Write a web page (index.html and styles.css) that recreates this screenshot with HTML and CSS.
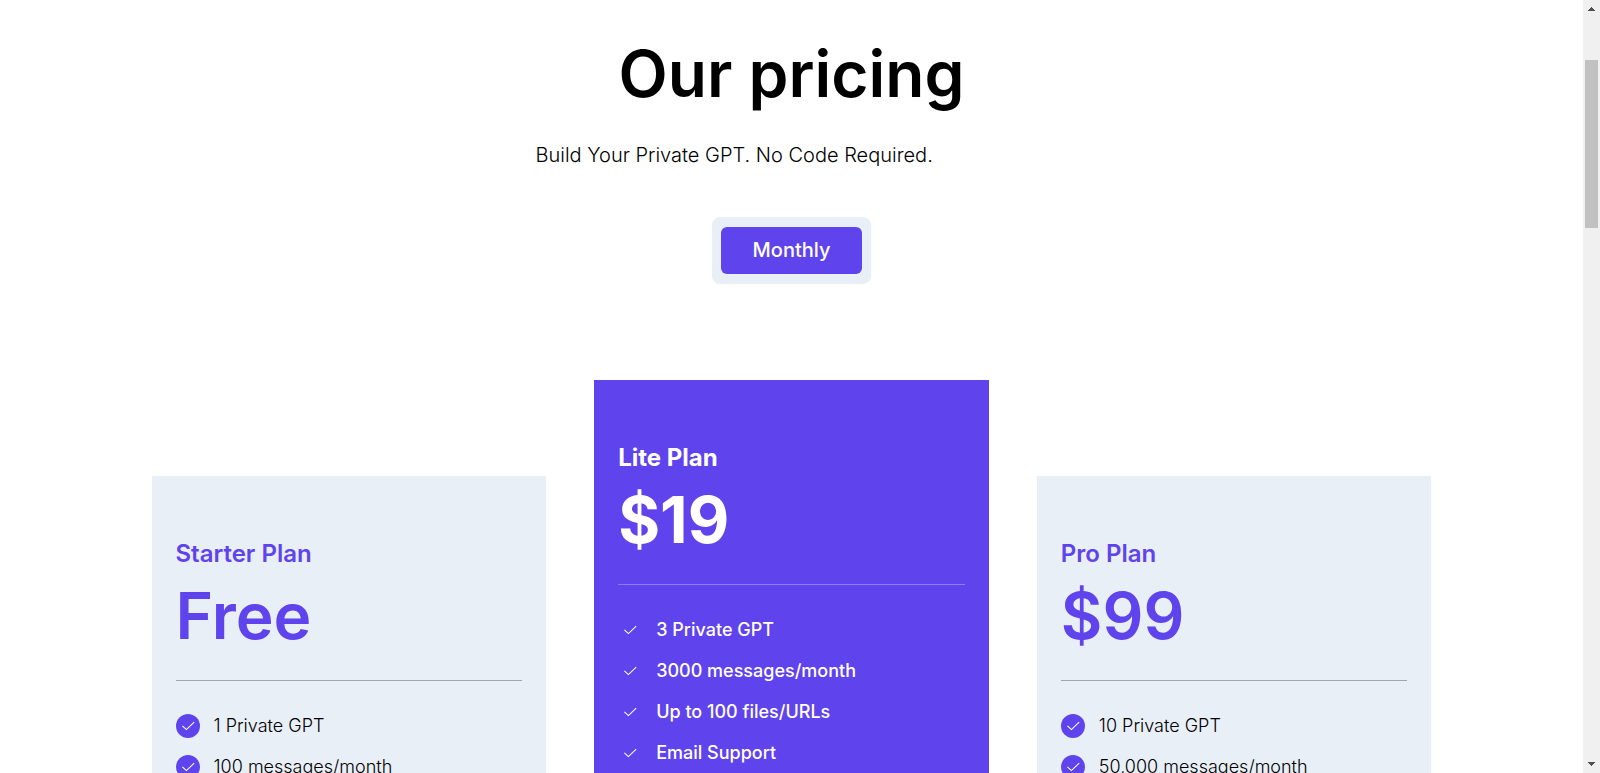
FILE: index.html
```html
<!DOCTYPE html>
<html lang="en">
<head>
<meta charset="utf-8">
<title>Our pricing</title>
<link rel="stylesheet" href="styles.css">
</head>
<body>
<svg class="defs" aria-hidden="true">
  <symbol id="check" viewBox="0 0 24 24">
    <path d="M6.4 11.8L10.4 15.6L18.2 8.2" fill="none" stroke="#fff" stroke-width="1.1"/>
  </symbol>
</svg>
<div class="viewport">
  <main class="page">
    <header class="intro">
      <h1 class="heading">Our pricing</h1>
      <p class="subheading">Build Your Private GPT. No Code Required.</p>
      <div class="toggle"><button class="toggle-button" type="button">Monthly</button></div>
    </header>
    <section class="plans">
      <article class="card">
        <h2 class="plan-name">Starter Plan</h2>
        <p class="price">Free</p>
        <ul class="features">
          <li class="feature"><svg class="tick"><use href="#check"/></svg>1 Private GPT</li>
          <li class="feature"><svg class="tick"><use href="#check"/></svg>100 messages/month</li>
        </ul>
      </article>
      <article class="card featured">
        <h2 class="plan-name">Lite Plan</h2>
        <p class="price">$19</p>
        <ul class="features">
          <li class="feature"><svg class="tick"><use href="#check"/></svg>3 Private GPT</li>
          <li class="feature"><svg class="tick"><use href="#check"/></svg>3000 messages/month</li>
          <li class="feature"><svg class="tick"><use href="#check"/></svg>Up to 100 files/URLs</li>
          <li class="feature"><svg class="tick"><use href="#check"/></svg>Email Support</li>
        </ul>
      </article>
      <article class="card">
        <h2 class="plan-name">Pro Plan</h2>
        <p class="price">$99</p>
        <ul class="features">
          <li class="feature"><svg class="tick"><use href="#check"/></svg>10 Private GPT</li>
          <li class="feature"><svg class="tick"><use href="#check"/></svg>50,000 messages/month</li>
        </ul>
      </article>
    </section>
  </main>
  <div class="scrollbar" aria-hidden="true">
    <svg class="arrow" viewBox="0 0 17 17" shape-rendering="crispEdges"><path d="M8 7h1v1h1v1h1v1h1v1H5v-1h1V9h1V8h1z" fill="#505050"/></svg>
    <div class="track"><div class="thumb"></div></div>
    <svg class="arrow" viewBox="0 0 17 17" shape-rendering="crispEdges"><path d="M5 6h7v1h-1v1h-1v1H9v1H8V9H7V8H6V7H5z" fill="#505050"/></svg>
  </div>
</div>
</body>
</html>
```

FILE: styles.css
```css
* {
  box-sizing: border-box;
  margin: 0;
  padding: 0;
}

body {
  background: #fff;
  color: #000;
  font-family: Inter, "Liberation Sans", sans-serif;
}

.defs {
  display: none;
}

.viewport {
  display: flex;
  height: 100vh;
  overflow: hidden;
}

.page {
  flex: 1;
  display: flex;
  flex-direction: column;
  gap: 96px;
  padding-top: 36px;
  overflow: hidden;
}

.intro {
  display: flex;
  flex-direction: column;
  align-items: center;
}

.heading {
  font-size: 64px;
  font-weight: 600;
  line-height: 76px;
}

.subheading {
  width: 100%;
  max-width: 512px;
  margin: 29px 0 48px;
  font-size: 20px;
  font-weight: 300;
  line-height: 28px;
}

.toggle {
  padding: 10px 9px;
  border-radius: 8px;
  background: #e8eff7;
}

.toggle-button {
  display: block;
  padding: 10px 32px;
  border: 0;
  border-radius: 6px;
  background: #5f43ec;
  color: #fff;
  font: 500 20px/27px Inter, "Liberation Sans", sans-serif;
}

.plans {
  display: grid;
  grid-template-columns: repeat(3, 1fr);
  gap: 48px;
  width: 100%;
  max-width: 1280px;
  margin: 0 auto;
}

.card {
  margin-top: 96px;
  padding: 60px 24px;
  background: #e8eff7;
}

.featured {
  margin-top: 0;
  background: #5f43ec;
  color: #fff;
}

.plan-name {
  color: #5f43ec;
  font-size: 24px;
  font-weight: 600;
  line-height: 36px;
}

.price {
  color: #5f43ec;
  font-size: 64px;
  font-weight: 600;
  line-height: 88px;
}

.featured .plan-name,
.featured .price {
  color: #fff;
  font-weight: 700;
}

.features {
  display: flex;
  flex-direction: column;
  gap: 17px;
  margin-top: 20px;
  padding-top: 33px;
  border-top: 1px solid #a2a5b0;
  list-style: none;
}

.featured .features {
  border-color: #8f7bf2;
}

.feature {
  display: flex;
  align-items: center;
  gap: 14px;
  font-size: 18px;
  font-weight: 300;
  line-height: 24px;
}

.featured .feature {
  font-weight: 500;
}

.tick {
  width: 24px;
  height: 24px;
  border-radius: 50%;
  background: #5f43ec;
}

.scrollbar {
  display: flex;
  flex-direction: column;
  width: 17px;
  background: #f0f0f0;
}

.arrow {
  width: 17px;
  height: 17px;
}

.track {
  flex: 1;
  padding: 43px 2px 0;
}

.thumb {
  height: 168px;
  background: #c1c1c1;
}
```
